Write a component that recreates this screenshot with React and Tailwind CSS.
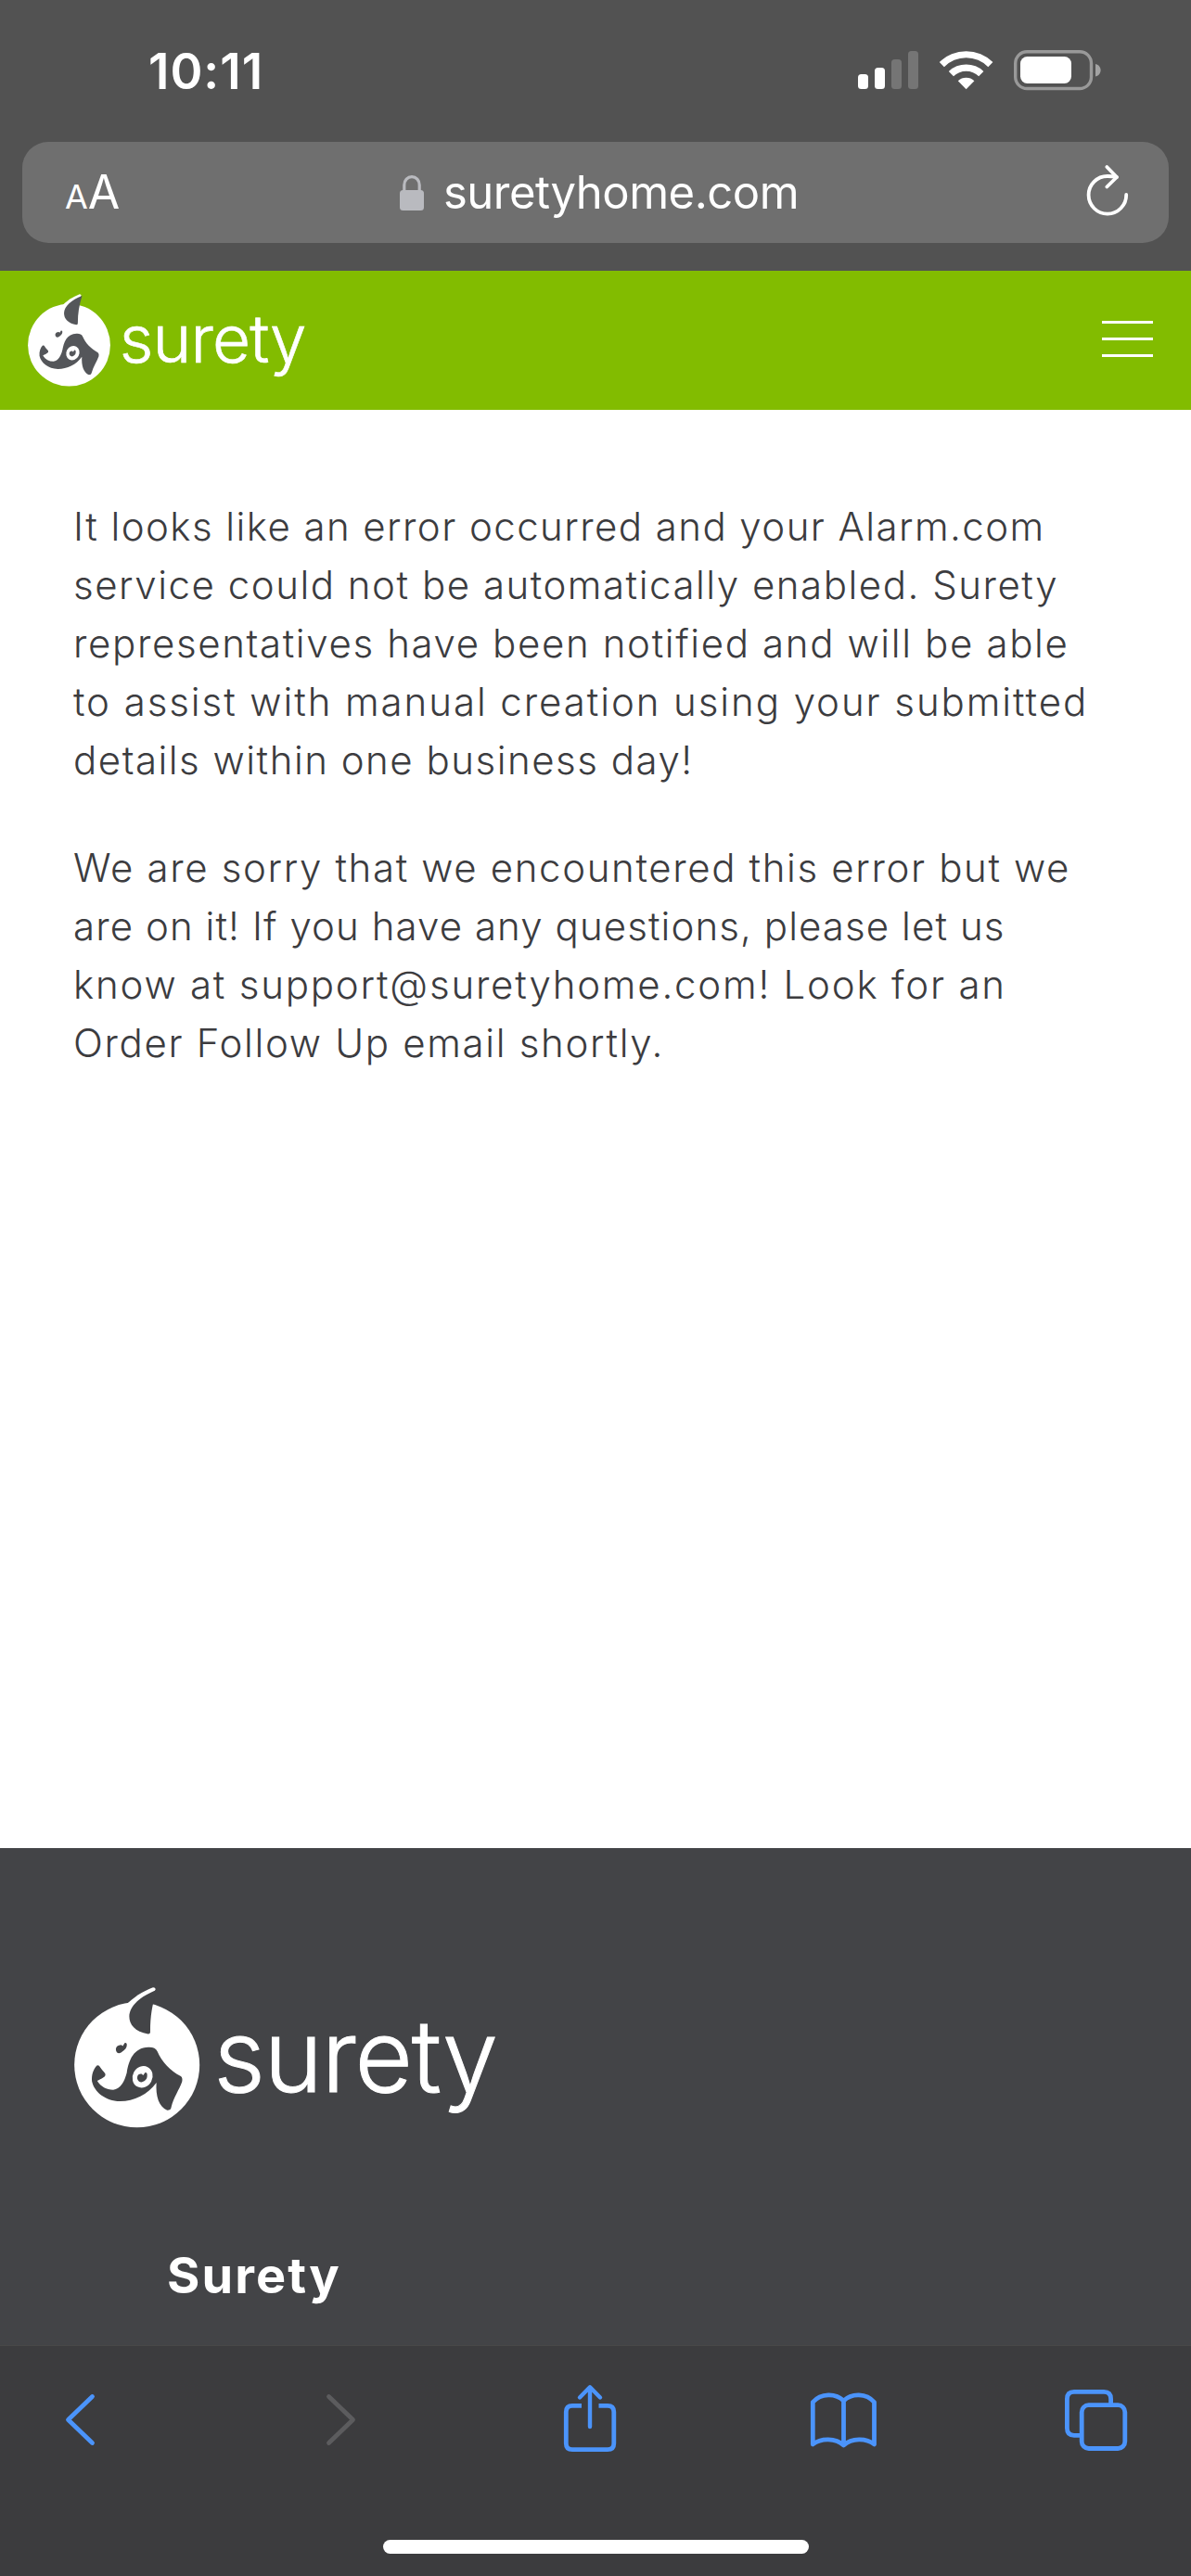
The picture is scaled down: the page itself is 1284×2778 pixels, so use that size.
const errorText = [
  [
    { text: 'It looks like an error occurred and your Alarm.com', tracking: 'tracking-[1.43px]' },
    { text: 'service could not be automatically enabled. Surety', tracking: 'tracking-[1.52px]' },
    { text: 'representatives have been notified and will be able', tracking: 'tracking-[1.63px]' },
    { text: 'to assist with manual creation using your submitted', tracking: 'tracking-[1.92px]' },
    { text: 'details within one business day!', tracking: 'tracking-[1.5px]' },
  ],
  [
    { text: 'We are sorry that we encountered this error but we', tracking: 'tracking-[1.63px]' },
    { text: 'are on it! If you have any questions, please let us', tracking: 'tracking-[1.08px]' },
    { text: 'know at support@suretyhome.com! Look for an', tracking: 'tracking-[1.78px]' },
    { text: 'Order Follow Up email shortly.', tracking: 'tracking-[1.67px]' },
  ],
];

function StatusIcons() {
  return (
    <svg className="mt-[50px] h-[52px] w-[264px]" viewBox="924 50 264 52" fill="none">
      <rect x="925" y="80" width="11" height="16" rx="3.5" fill="#fff" />
      <rect x="943" y="73" width="11" height="23" rx="3.5" fill="#fff" />
      <rect x="961" y="64" width="11" height="32" rx="3.5" fill="#757575" />
      <rect x="979" y="55" width="11" height="41" rx="3.5" fill="#757575" />
      {/* wifi */}
      <path d="M1012.8 67 A41 41 0 0 1 1070.4 67 L1065.3 72.2 A33 33 0 0 0 1017.9 72.2 Z" fill="#fff" />
      <path d="M1022.8 77 A27 27 0 0 1 1060.4 77 L1055.2 82.3 A19.5 19.5 0 0 0 1028 82.3 Z" fill="#fff" />
      <path d="M1032.8 87.2 A13 13 0 0 1 1050.4 87.2 L1041.6 96.2 Z" fill="#fff" />
      {/* battery */}
      <rect x="1094.7" y="55.7" width="81.8" height="39.8" rx="12.5" stroke="#999" strokeWidth="3.4" />
      <rect x="1100" y="61" width="55" height="29" rx="7.5" fill="#fff" />
      <path d="M1181 69 C1185 70 1186.6 73 1186.6 75.7 C1186.6 78.5 1185 81.5 1181 82.5 Z" fill="#a3a3a3" />
    </svg>
  );
}

function LockIcon() {
  return (
    <svg className="h-[38px] w-[26px]" viewBox="0 0 26 38" fill="none">
      <path d="M4.8 18 V10.5 A8.2 8.9 0 0 1 21.2 10.5 V18" stroke="#b9babf" strokeWidth="3.2" />
      <rect y="16" width="26" height="22" rx="3.5" fill="#b9babf" />
    </svg>
  );
}

function ReloadIcon() {
  return (
    <svg
      className="mb-[5px] h-[56px] w-[46px]"
      viewBox="1171 177 46 56"
      fill="none"
      stroke="#fff"
      strokeWidth="3.8"
      strokeLinecap="round"
      strokeLinejoin="round"
    >
      <path d="M1214.2 210 A20.3 20.3 0 1 1 1194 190 C1198 190 1201 190.4 1204 191" />
      <path d="M1193.3 180 L1204 191 L1193.3 201.5" />
    </svg>
  );
}

// patch is the colour of the ear, nose and face patch
function Logo({ className, patch }) {
  return (
    <svg className={className} viewBox="12 13 1352 457" overflow="visible">
      <circle cx="215" cy="265" r="203" fill="#fff" />
      <path d="M176 74 C204 46 232 27 267 14 Q275 14 275 21 L262 40 L200 110 Z" fill="#fff" />
      <path
        d="M279 22 C264 70 258 108 258 155 Q259 165 251 165 C208 158 190 134 190 108 C191 74 226 42 279 22 Z"
        fill={patch}
      />
      <path
        d="M147 218 C145 206 153 201 164 200 L169 204 L175 194 Q183 192 182 202 C181 214 172 219 162 226 Q150 230 147 218 Z"
        fill={patch}
      />
      <path
        d="M85 267 Q92 265 96 273 C101 281 107 286 112 293 C116 305 99 308 86 317 C98 336 116 346 138 346 C162 342 174 320 182 290 C189 250 203 210 252 208 Q274 207 281 221 C296 256 323 283 357 302 Q364 308 361 320 C352 346 334 370 326 402 Q325 412 313 412 C286 402 275 366 278 323 C250 362 206 383 160 383 C112 382 76 352 69 318 C67 297 74 278 85 267 Z"
        fill={patch}
      />
      <ellipse cx="233" cy="304" rx="32" ry="36" transform="rotate(28 233 304)" fill="#fff" />
      <path
        d="M216 310 C215 297 221 294 230 294 L235 299 L241 290 Q249 289 248 300 C248 312 240 318 230 321 Q219 321 216 310 Z"
        fill={patch}
      />
      <text
        x="463"
        y="352"
        textLength="922"
        fill="#fff"
        stroke="#fff"
        strokeWidth="3"
        className="font-['Inter',sans-serif] text-[324px] font-light"
      >
        surety
      </text>
    </svg>
  );
}

function AddressBar() {
  return (
    <div className="mx-6 flex h-[109px] items-center rounded-[28px] bg-[#6f6f6f] pr-[43px] pl-[46px] text-white">
      <div className="flex w-[361px] items-baseline pt-[5px] leading-[109px]">
        <span className="text-[36px]">A</span>
        <span className="text-[50px]">A</span>
      </div>
      <LockIcon />
      <span className="ml-[21px] flex-1 pt-px text-[49px] tracking-[-0.5px]">suretyhome.com</span>
      <ReloadIcon />
    </div>
  );
}

function SafariToolbar() {
  return (
    <nav className="h-[249px] border-t border-[#484848] bg-[#3c3c3e]">
      <svg
        className="block h-[200px] w-full"
        viewBox="0 2530 1284 200"
        fill="none"
        stroke="#4b94fb"
        strokeWidth="4.8"
        strokeLinecap="round"
        strokeLinejoin="round"
      >
        <path d="M99.5 2584.5 L73.5 2609.5 L99.5 2634.5" />
        <path d="M354.5 2584.5 L380.5 2609.5 L354.5 2634.5" stroke="#5c5c5e" />
        {/* share */}
        <path
          d="M627 2594.3 H617 Q610.3 2594.3 610.3 2601 V2635 Q610.3 2641.7 617 2641.7 H655 Q661.8 2641.7 661.8 2635 V2601 Q661.8 2594.3 655 2594.3 H645.5"
          strokeLinecap="butt"
        />
        <path d="M636 2617 V2574.5 M625 2585.5 L636 2574.3 L647 2585.5" strokeWidth="4.4" />
        {/* bookmarks */}
        <path d="M909.5 2637 V2589 C901 2580.5 885 2580.5 876.3 2590.5 V2636 C885 2629 901 2629 909.5 2637 C918 2629 934 2629 942.5 2636 V2590.5 C934 2580.5 918 2580.5 909.5 2589" />
        {/* tabs */}
        <rect x="1166.2" y="2593.7" width="46.6" height="46.8" rx="7.5" />
        <path
          d="M1197.6 2593 V2587 Q1197.6 2579.3 1190 2579.3 H1158 Q1150.4 2579.3 1150.4 2587 V2618.5 Q1150.4 2626.3 1158 2626.3 H1166"
          strokeLinecap="butt"
        />
      </svg>
      <div className="mx-auto mt-[9px] h-[15px] w-[459px] rounded-full bg-white" />
    </nav>
  );
}

export default function App() {
  return (
    <div className="flex h-[2778px] w-[1284px] flex-col overflow-hidden bg-white font-['Inter',sans-serif]">
      <div className="h-[292px] bg-[#525252]">
        <div className="flex h-[153px] justify-between pr-24 pl-40">
          <span className="mt-[47px] text-[53px] leading-[60px] font-semibold tracking-[1px] text-white">10:11</span>
          <StatusIcons />
        </div>
        <AddressBar />
      </div>

      <header className="flex h-[150px] justify-between bg-[#82bc00] pt-[25px] pr-[41px] pl-[30px]">
        <Logo className="h-[100px] w-[296px]" patch="#54565a" />
        <div className="mt-[29px] flex w-[55px] flex-col gap-[15px]">
          <span className="h-[3px] bg-white" />
          <span className="h-[3px] bg-white" />
          <span className="h-[3px] bg-white" />
        </div>
      </header>

      <main className="flex h-[1551px] flex-col gap-[53px] pt-[94px] pl-[79px] text-[42px] leading-[63px] font-[350] whitespace-nowrap text-[#3c3c3f]">
        {errorText.map((lines, i) => (
          <p key={i}>
            {lines.map((line) => (
              <span key={line.text} className={`block ${line.tracking}`}>
                {line.text}
              </span>
            ))}
          </p>
        ))}
      </main>

      <footer className="h-[536px] bg-[#434447] pt-[150px] pl-20">
        <Logo className="h-[152px] w-[450px]" patch="#434447" />
        <h4 className="mt-[129px] ml-[100px] text-[54px] leading-[60px] font-bold tracking-[2.1px] text-white">Surety</h4>
      </footer>

      <SafariToolbar />
    </div>
  );
}
